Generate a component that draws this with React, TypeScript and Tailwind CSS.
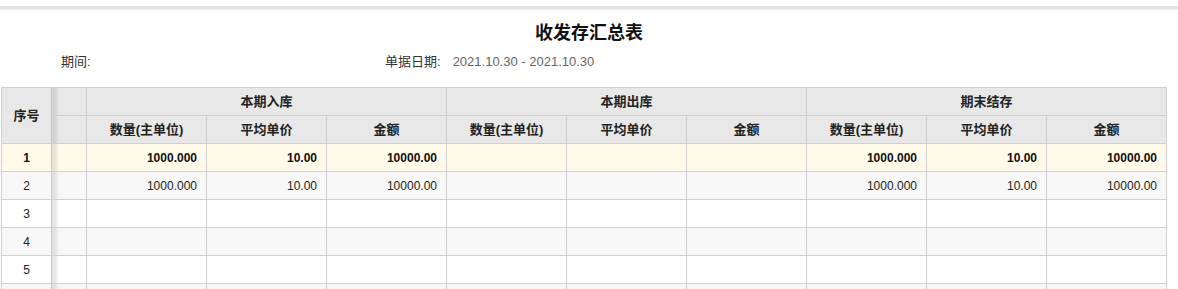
import React from 'react';

const font = "font-['Liberation_Sans','Noto_Sans_CJK_SC',sans-serif]";

const groups = ['本期入库', '本期出库', '期末结存'];
const subCols = ['数量(主单位)', '平均单价', '金额'];

type Row = { no: string; vals: string[]; bold?: boolean; bg: string };

const filled = ['1000.000', '10.00', '10000.00', '', '', '', '1000.000', '10.00', '10000.00'];
const empty = Array(9).fill('');

// last row is only a sliver at the bottom edge
const rows: Row[] = [
  { no: '1', vals: filled, bold: true, bg: 'bg-[#fffaea]' },
  { no: '2', vals: filled, bg: 'bg-[#f8f8f8]' },
  { no: '3', vals: empty, bg: 'bg-white' },
  { no: '4', vals: empty, bg: 'bg-[#f8f8f8]' },
  { no: '5', vals: empty, bg: 'bg-white' },
  { no: '', vals: empty, bg: 'bg-[#f8f8f8]' },
];

const cell = 'border border-[#d0d0d0] h-[28px] p-0';
const shade = 'bg-[linear-gradient(to_right,rgba(0,0,0,0.13),rgba(0,0,0,0)_7px)]';

export default function App() {
  return (
    <div className={`w-[1178px] h-[289px] overflow-hidden bg-white text-[#222] ${font}`}>
      <div className="pt-[6px]">
        <div className="h-[3px] bg-[#e4e4e4] shadow-[0_1px_2px_rgba(0,0,0,0.08)]" />
      </div>
      <h1 className="text-center text-[18px] font-bold leading-[24px] mt-[12px] text-[#111]">收发存汇总表</h1>
      <div className="flex items-center text-[13px] h-[20px] mt-[7px]">
        <span className="ml-[61px] w-[324px] text-[#333]">期间:</span>
        <span className="text-[#333]">单据日期:</span>
        <span className="ml-[12px] text-[#666]">2021.10.30 - 2021.10.30</span>
      </div>
      <table className="mt-[15px] ml-[1px] border-collapse table-fixed w-[1166px]">
        <colgroup>
          <col className="w-[50px]" />
          <col className="w-[35px]" />
          {Array.from({ length: 9 }).map((_, i) => (
            <col key={i} className="w-[120px]" />
          ))}
        </colgroup>
        <thead>
          <tr className="bg-[#e8e8e8] text-[13px] font-bold">
            <th rowSpan={2} className={`${cell} border-r-[#c4c4c4]`}>序号</th>
            <th className={`${cell} ${shade}`} />
            {groups.map((g) => (
              <th key={g} colSpan={3} className={cell}>{g}</th>
            ))}
          </tr>
          <tr className="bg-[#e8e8e8] text-[13px] font-bold">
            <th className={`${cell} ${shade}`} />
            {groups.flatMap((g) =>
              subCols.map((c) => (
                <th key={g + c} className={cell}>{c}</th>
              ))
            )}
          </tr>
        </thead>
        <tbody>
          {rows.map((r, idx) => (
            <tr key={idx} className={`${r.bg} text-[12px] ${r.bold ? 'font-bold text-[#111]' : 'text-[#222]'}`}>
              <td className={`${cell} text-center border-r-[#c4c4c4]`}>{r.no}</td>
              <td className={`${cell} ${shade}`} />
              {r.vals.map((v, i) => (
                <td key={i} className={`${cell} text-right pr-[9px]`}>{v}</td>
              ))}
            </tr>
          ))}
        </tbody>
      </table>
    </div>
  );
}
